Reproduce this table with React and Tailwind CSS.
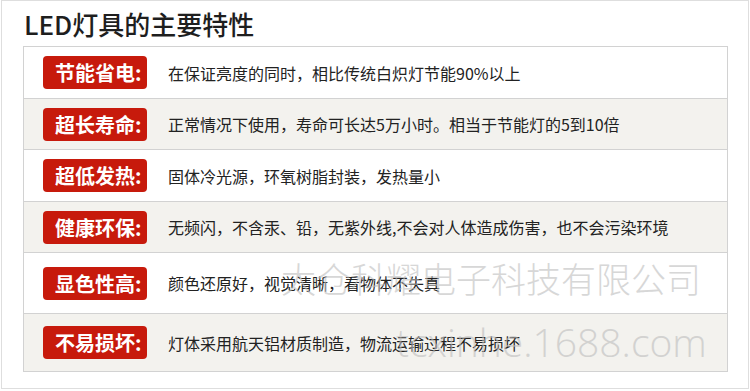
const features = [
  { label: '节能省电:', text: '在保证亮度的同时，相比传统白炽灯节能90%以上', h: 'h-[52px]', bg: 'bg-white' },
  { label: '超长寿命:', text: '正常情况下使用，寿命可长达5万小时。相当于节能灯的5到10倍', h: 'h-[51px]', bg: 'bg-[#f3f2ee]' },
  { label: '超低发热:', text: '固体冷光源，环氧树脂封装，发热量小', h: 'h-[52px]', bg: 'bg-white' },
  { label: '健康环保:', text: '无频闪，不含汞、铅，无紫外线,不会对人体造成伤害，也不会污染环境', h: 'h-[51px]', bg: 'bg-[#f3f2ee]' },
  { label: '显色性高:', text: '颜色还原好，视觉清晰，看物体不失真', h: 'h-[61px]', bg: 'bg-white' },
  { label: '不易损坏:', text: '灯体采用航天铝材质制造，物流运输过程不易损坏', h: 'h-[58px]', bg: 'bg-[#f3f2ee]' },
];

export default function App() {
  return (
    <div className="w-[750px] h-[391px] bg-white relative overflow-hidden font-['Noto_Sans_CJK_SC',sans-serif]">
      <div className="ml-px w-[748px] h-[389px] border border-[#dedede]">
        <div className="h-[45px] pl-[22px] pt-[6px] text-[26px] leading-[33px] font-medium text-[#1e1e1e]">
          LED灯具的主要特性
        </div>
        <div className="ml-[21px] w-[705px] border-t border-x border-[#d2d2d2]">
          {features.map((f) => (
            <div key={f.label} className={`${f.h} ${f.bg} flex items-center border-b border-[#d2d2d2] pl-[19px]`}>
              <div className="w-[104px] h-[33px] rounded-[4px] bg-[#c71a0c] text-white font-bold text-[20px] leading-[33px] pl-[12px] whitespace-nowrap">
                {f.label}
              </div>
              <div className="ml-[21px] text-[16px] text-[#222] whitespace-nowrap">
                {f.text}
              </div>
            </div>
          ))}
        </div>
      </div>

      {/* watermark */}
      <div className="absolute left-[281px] top-[256px] text-[35px] leading-[44px] font-light text-[#bdbdbd] opacity-60 whitespace-nowrap pointer-events-none">
        太仓科耀电子科技有限公司
      </div>
      <div className="absolute left-[396px] top-[318px] text-[39px] leading-[48px] font-light font-['Open_Sans',sans-serif] text-[#bdbdbd] opacity-60 whitespace-nowrap pointer-events-none">
        tcxinhe.1688.com
      </div>
    </div>
  );
}
